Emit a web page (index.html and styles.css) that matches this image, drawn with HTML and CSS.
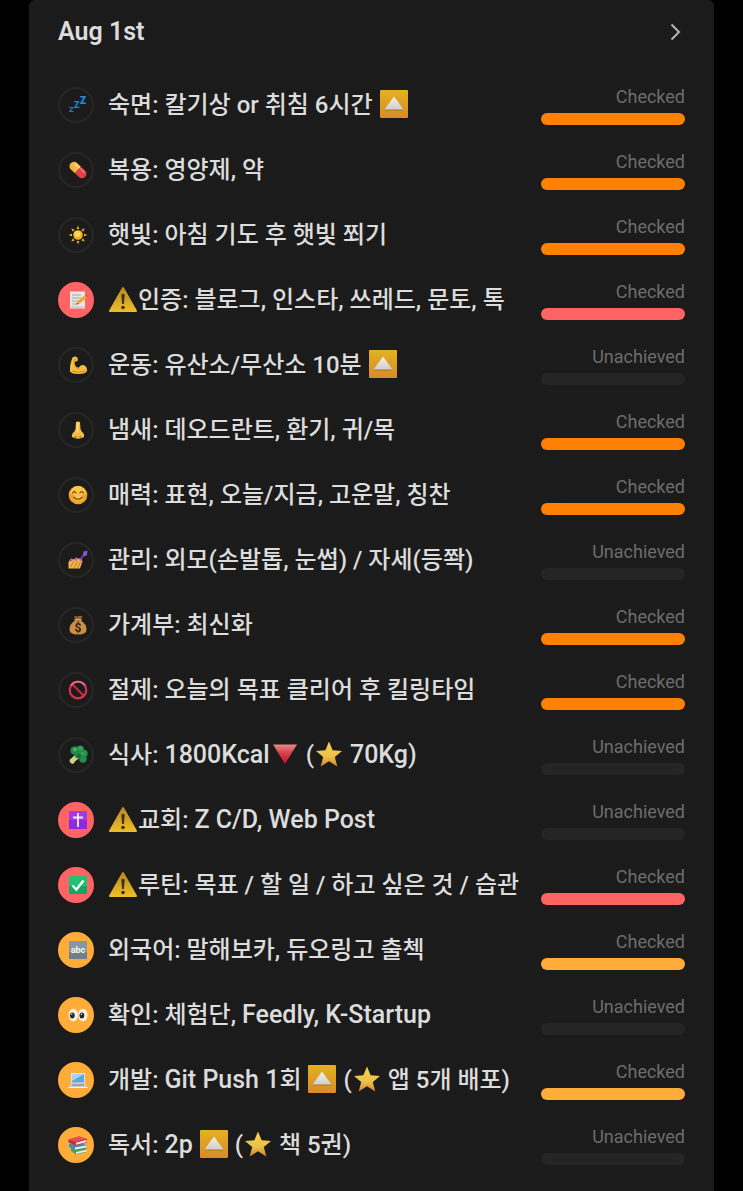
FILE: index.html
```html
<!DOCTYPE html>
<html lang="ko">
<head>
  <meta charset="UTF-8">
  <meta name="viewport" content="width=device-width, initial-scale=1.0">
  <title>Aug 1st</title>
  <link rel="stylesheet" href="styles.css">
</head>
<body>
  <!-- shared emoji -->
  <svg class="sprite" aria-hidden="true">
    <defs>
      <linearGradient id="gold" x1="0" y1="0" x2="0" y2="1">
        <stop offset="0" stop-color="#e2b21f"/>
        <stop offset="1" stop-color="#d98a2b"/>
      </linearGradient>
      <linearGradient id="white" x1="0" y1="0" x2="0" y2="1">
        <stop offset="0" stop-color="#f4f0e6"/>
        <stop offset="1" stop-color="#cfcfcf"/>
      </linearGradient>
      <linearGradient id="warn" x1="0" y1="0" x2="0" y2="1">
        <stop offset="0" stop-color="#b98a1c"/>
        <stop offset="1" stop-color="#ecbc2c"/>
      </linearGradient>
      <linearGradient id="star-fill" x1="0" y1="0" x2="0" y2="1">
        <stop offset="0" stop-color="#f3d548"/>
        <stop offset="0.6" stop-color="#ecc04a"/>
        <stop offset="1" stop-color="#d8832a"/>
      </linearGradient>
      <linearGradient id="red" x1="0" y1="0" x2="0" y2="1">
        <stop offset="0" stop-color="#e58a8c"/>
        <stop offset="0.4" stop-color="#d8474f"/>
        <stop offset="1" stop-color="#c00f22"/>
      </linearGradient>
    </defs>
    <symbol id="up" viewBox="0 0 28 28">
      <rect width="28" height="28" rx="1" fill="url(#gold)"/>
      <path d="M4.500 20.500 L14 7.500 L23.500 20.500z" fill="#a87616"/>
      <path d="M4.500 19.500 L14 6.500 L23.500 19.500z" fill="url(#white)"/>
    </symbol>
    <symbol id="warning" viewBox="0 0 28 28">
      <path d="M14 3 L27 26 H1z" fill="url(#warn)" stroke="url(#warn)" stroke-width="2" stroke-linejoin="round"/>
      <path d="M12.300 9.500 q1.700-1.500 3.400 0 l-.8 9.500 h-1.800z" fill="#3d3017"/>
      <circle cx="14" cy="22.500" r="1.800" fill="#3d3017"/>
    </symbol>
    <symbol id="star" viewBox="0 0 28 28">
      <path d="M14 1.500 L17.600 10.300 L27 11 L19.800 17 L22.300 26.500 L14 21.300 L5.700 26.500 L8.200 17 L1 11 L10.400 10.300z" fill="url(#star-fill)"/>
    </symbol>
    <symbol id="down" viewBox="0 0 28 28">
      <path d="M2 4.500 H26 L14 24z" fill="url(#red)"/>
    </symbol>
  </svg>

  <main class="card">
    <header class="header">
      <h1>Aug 1st</h1>
      <button class="next" type="button" aria-label="Next">
        <svg viewBox="0 0 20 20"><path d="M6.500 2.500 L14 10 L6.500 17.500"/></svg>
      </button>
    </header>

    <ul class="list">
      <li class="row">
        <span class="icon">
          <svg viewBox="0 0 20 20" class="zzz">
            <text x="1" y="17" font-size="8" fill="#1873cf">Z</text>
            <text x="6" y="13" font-size="9" fill="#1b84dc">Z</text>
            <text x="12" y="9" font-size="10" fill="#1d8fe6">Z</text>
          </svg>
        </span>
        <h2 class="title">숙면: 칼기상 or 취침 6시간 <svg class="emoji"><use href="#up"/></svg></h2>
        <div class="status"><span>Checked</span><div class="bar orange"></div></div>
      </li>
      <li class="row">
        <span class="icon">
          <svg viewBox="0 0 20 20">
            <g transform="rotate(43 10 10)">
              <path d="M10 5.500 H4.500 a4.500 4.500 0 0 0 0 9 H10z" fill="#f5b544"/>
              <path d="M10 5.500 H15.500 a4.500 4.500 0 0 1 0 9 H10z" fill="#e2404a"/>
              <path d="M4 7.500 H9" stroke="#ffdf94" stroke-width="1.500" stroke-linecap="round"/>
              <path d="M11 7.500 H16" stroke="#f58086" stroke-width="1.200" stroke-linecap="round"/>
            </g>
          </svg>
        </span>
        <h2 class="title">복용: 영양제, 약</h2>
        <div class="status"><span>Checked</span><div class="bar orange"></div></div>
      </li>
      <li class="row">
        <span class="icon">
          <svg viewBox="0 0 20 20">
            <g fill="#f2b01e">
              <path id="ray" d="M8.700 4 L10 .5 L11.300 4z"/>
              <use href="#ray" transform="rotate(45 10 10)"/>
              <use href="#ray" transform="rotate(90 10 10)"/>
              <use href="#ray" transform="rotate(135 10 10)"/>
              <use href="#ray" transform="rotate(180 10 10)"/>
              <use href="#ray" transform="rotate(225 10 10)"/>
              <use href="#ray" transform="rotate(270 10 10)"/>
              <use href="#ray" transform="rotate(315 10 10)"/>
              <circle cx="10" cy="10" r="4.800"/>
            </g>
            <circle cx="9.500" cy="9" r="3" fill="#ffd75c"/>
          </svg>
        </span>
        <h2 class="title">햇빛: 아침 기도 후 햇빛 쬐기</h2>
        <div class="status"><span>Checked</span><div class="bar orange"></div></div>
      </li>
      <li class="row">
        <span class="icon red">
          <svg viewBox="0 0 20 20">
            <path d="M2 1.500 H17 V18.500 H2z" fill="#e9e7e4"/>
            <path d="M4 5 H13 M4 8 H14 M4 11 H11 M4 14 H9" stroke="#a3a7ab"/>
            <path d="M3 17 H16.500" stroke="#bdb9b4"/>
            <path d="M8.500 14.500 L9.500 11.500 L17 5 L19 7.500 L11.500 13.800z" fill="#f0a32b"/>
            <path d="M17 5 l1-.9 2 2.400 -1 1z" fill="#d0526a"/>
            <path d="M8.500 14.500 l.5-1.500 1.200 1.100z" fill="#3a3330"/>
          </svg>
        </span>
        <h2 class="title"><svg class="emoji"><use href="#warning"/></svg>인증: 블로그, 인스타, 쓰레드, 문토, 톡</h2>
        <div class="status"><span>Checked</span><div class="bar red"></div></div>
      </li>
      <li class="row">
        <span class="icon">
          <svg viewBox="0 0 20 20">
            <path d="M4.500 2.500 Q7.500 .5 9.500 3 Q10.500 5.500 8.500 6.500 L6.800 6.200 Q6 8.500 7.500 11 Q9.500 13 11 12.500 Q12 9.500 15.500 10 Q19.500 11.500 19 16 Q18 19 10 19 Q4 19 2 16.500 Q1.500 10 4.500 2.500z" fill="#f6bd3b"/>
            <path d="M4 16 Q10 18.500 17.500 16 M7.500 11.500 Q8.500 13.500 11 13.800 M5.500 5.500 L8 4" stroke="#cf8626" fill="none"/>
          </svg>
        </span>
        <h2 class="title">운동: 유산소/무산소 10분 <svg class="emoji"><use href="#up"/></svg></h2>
        <div class="status"><span>Unachieved</span><div class="bar"></div></div>
      </li>
      <li class="row">
        <span class="icon">
          <svg viewBox="0 0 20 20">
            <path d="M8 2 Q10 .8 12 2 L12.500 9 Q13 11.500 15.500 13.500 Q17.500 17.500 13.500 18 Q10 19.500 6.500 18 Q2.500 17.500 4.500 13.500 Q7 11.500 7.500 9z" fill="#f5bd45"/>
            <path d="M9.500 3 V12" stroke="#ffdf88" stroke-width="1.500" stroke-linecap="round"/>
            <ellipse cx="7.500" cy="17" rx="1.300" ry=".8" fill="#a86420"/>
            <ellipse cx="12.500" cy="17" rx="1.300" ry=".8" fill="#a86420"/>
          </svg>
        </span>
        <h2 class="title">냄새: 데오드란트, 환기, 귀/목</h2>
        <div class="status"><span>Checked</span><div class="bar orange"></div></div>
      </li>
      <li class="row">
        <span class="icon">
          <svg viewBox="0 0 20 20">
            <circle cx="10" cy="10" r="9.300" fill="#f2a32c"/>
            <circle cx="10" cy="8.500" r="7.500" fill="#fbc646"/>
            <circle cx="4.500" cy="11.500" r="2.200" fill="#f0983a"/>
            <circle cx="15.500" cy="11.500" r="2.200" fill="#f0983a"/>
            <path d="M4.500 8 q1.800-2.700 3.600 0 M11.900 8 q1.800-2.700 3.600 0 M6 12.500 q4 3.500 8 0" stroke="#69421c" stroke-width="1.200" stroke-linecap="round" fill="none"/>
          </svg>
        </span>
        <h2 class="title">매력: 표현, 오늘/지금, 고운말, 칭찬</h2>
        <div class="status"><span>Checked</span><div class="bar orange"></div></div>
      </li>
      <li class="row">
        <span class="icon">
          <svg viewBox="0 0 20 20">
            <path d="M.5 18.500 V12 L3 8.500 L6 9.500 L8 7.500 L10.500 8.800 L13 8 L14.500 11 L12 18.500z" fill="#f2b64b"/>
            <path d="M2.500 17 L6 11 M6 18 L9.500 11.500 M9.500 18 L12.500 12" stroke="#b9782d"/>
            <path d="M1.500 11 L3.300 8.500 5 9.500 3.500 11.800z M6.500 10 L8.200 7.500 10 8.800 8.500 11z M11 10 L13 7.800 14.500 10 13 11.500z" fill="#b45ac6"/>
            <path d="M12 9.500 L16 5" stroke="#7c4bb8" stroke-width="1.500"/>
            <path d="M15.500 1.500 L19.500 .5 L19 5 L16.500 6.500 L14.800 4.800z" fill="#8a55c8"/>
          </svg>
        </span>
        <h2 class="title">관리: 외모(손발톱, 눈썹) / 자세(등쫙)</h2>
        <div class="status"><span>Unachieved</span><div class="bar"></div></div>
      </li>
      <li class="row">
        <span class="icon">
          <svg viewBox="0 0 20 20">
            <path d="M6 1.500 Q8 .5 9.500 1.800 Q12 0 14.500 1.500 L12.800 4.500 H7.500z" fill="#94652c"/>
            <path d="M7 5.500 H13 Q18.500 9 18.500 14.500 Q18.500 19.500 10 19.500 Q1.500 19.500 1.500 14.500 Q1.500 9 7 5.500z" fill="#ca8f45"/>
            <path d="M6.500 4.800 H13.500" stroke="#e3b254" stroke-width="1.500"/>
            <text x="10" y="17" font-size="12" font-weight="700" text-anchor="middle" fill="#33220f">$</text>
          </svg>
        </span>
        <h2 class="title">가계부: 최신화</h2>
        <div class="status"><span>Checked</span><div class="bar orange"></div></div>
      </li>
      <li class="row">
        <span class="icon">
          <svg viewBox="0 0 20 20">
            <path d="M4 4 L16 16" stroke="#c82645" stroke-width="2.200"/>
            <circle cx="10" cy="10" r="8.300" fill="none" stroke="#d5304e" stroke-width="2.200"/>
            <path d="M3 5.500 A8.300 8.300 0 0 1 17 5.500" fill="none" stroke="#e2798a" stroke-width="1.500"/>
          </svg>
        </span>
        <h2 class="title">절제: 오늘의 목표 클리어 후 킬링타임</h2>
        <div class="status"><span>Checked</span><div class="bar orange"></div></div>
      </li>
      <li class="row">
        <span class="icon">
          <svg viewBox="0 0 20 20">
            <path d="M1.500 15 L8 9 L13 12 L8 15.500 L5 19 Q1.500 18.500 1.500 15z" fill="#d3d08a"/>
            <g fill="#238a49">
              <circle cx="6.500" cy="5.500" r="4"/>
              <circle cx="12" cy="4.500" r="4"/>
              <circle cx="16" cy="8.500" r="3.800"/>
              <circle cx="15" cy="14" r="3.800"/>
              <circle cx="10.500" cy="9.500" r="4"/>
            </g>
            <circle cx="7" cy="4.500" r="2" fill="#46b25f"/>
            <circle cx="12.500" cy="3.500" r="2" fill="#3aa557"/>
            <circle cx="15" cy="8.500" r="2" fill="#36a055"/>
            <circle cx="11" cy="11" r="2" fill="#176b39"/>
          </svg>
        </span>
        <h2 class="title">식사: <span class="en">1800Kcal</span><svg class="emoji"><use href="#down"/></svg> (<svg class="emoji"><use href="#star"/></svg> <span class="en">70Kg)</span></h2>
        <div class="status"><span>Unachieved</span><div class="bar"></div></div>
      </li>
      <li class="row">
        <span class="icon red">
          <svg viewBox="0 0 20 20">
            <rect x="1" y="1" width="18" height="18" fill="#a43be0"/>
            <rect x="1" y="10" width="18" height="9" fill="#8a2be2"/>
            <path d="M10 3 V17 M5 7.500 H15" stroke="#f3eaf8" stroke-width="1.800"/>
          </svg>
        </span>
        <h2 class="title"><svg class="emoji"><use href="#warning"/></svg>교회: <span class="en">Z C/D, Web Post</span></h2>
        <div class="status"><span>Unachieved</span><div class="bar"></div></div>
      </li>
      <li class="row">
        <span class="icon red">
          <svg viewBox="0 0 20 20">
            <rect x="1" y="1" width="18" height="18" fill="#21c275"/>
            <rect x="1" y="11" width="18" height="8" fill="#12a860"/>
            <path d="M4.500 10.500 L8.300 14.500 L15.500 5.500" stroke="#f1fff6" stroke-width="2.500" fill="none"/>
          </svg>
        </span>
        <h2 class="title"><svg class="emoji"><use href="#warning"/></svg>루틴: 목표 / 할 일 / 하고 싶은 것 / 습관</h2>
        <div class="status"><span>Checked</span><div class="bar red"></div></div>
      </li>
      <li class="row">
        <span class="icon amber">
          <svg viewBox="0 0 20 20">
            <rect x="1" y="1" width="18" height="18" fill="#8597a4"/>
            <rect x="1" y="12" width="18" height="7" fill="#6f7f8c"/>
            <text x="10" y="13" font-size="9" font-weight="700" text-anchor="middle" fill="#f2f2f2">abc</text>
          </svg>
        </span>
        <h2 class="title">외국어: 말해보카, 듀오링고 출첵</h2>
        <div class="status"><span>Checked</span><div class="bar amber"></div></div>
      </li>
      <li class="row">
        <span class="icon amber">
          <svg viewBox="0 0 20 20">
            <ellipse cx="5.300" cy="10" rx="4.600" ry="6.300" fill="#f7f4ee"/>
            <ellipse cx="14.900" cy="10" rx="4.600" ry="6.300" fill="#f7f4ee"/>
            <ellipse cx="4.300" cy="10.500" rx="2.400" ry="3" fill="#2c2521"/>
            <ellipse cx="13.900" cy="10.500" rx="2.400" ry="3" fill="#2c2521"/>
            <circle cx="3.800" cy="9.300" r=".7" fill="#fff"/>
            <circle cx="13.400" cy="9.300" r=".7" fill="#fff"/>
          </svg>
        </span>
        <h2 class="title">확인: 체험단, <span class="en">Feedly, K-Startup</span></h2>
        <div class="status"><span>Unachieved</span><div class="bar"></div></div>
      </li>
      <li class="row">
        <span class="icon amber">
          <svg viewBox="0 0 20 20">
            <path d="M3 3 H17 V13.500 H3z" fill="#dfe4e8"/>
            <path d="M4 4 H16 V12.500 H4z" fill="#5ba7e4"/>
            <path d="M4 4 H16 L4 11z" fill="#a9d5f5"/>
            <path d="M3 13.500 H17 L19.500 17 H.5z" fill="#c5cacd"/>
            <path d="M4 15 H16" stroke="#7b8388"/>
            <path d="M.5 17 H19.500 V18 H.5z" fill="#eff1f2"/>
          </svg>
        </span>
        <h2 class="title">개발: <span class="en">Git Push 1</span>회 <svg class="emoji"><use href="#up"/></svg> (<svg class="emoji"><use href="#star"/></svg> 앱 5개 배포)</h2>
        <div class="status"><span>Checked</span><div class="bar amber"></div></div>
      </li>
      <li class="row">
        <span class="icon amber">
          <svg viewBox="0 0 20 20">
            <path d="M3 13 L13 11 L19 14 V17 L8 19.500 L3 16z" fill="#4f9c57"/>
            <path d="M8 17 L19 14.500 V16.500 L8 19z" fill="#e9ebe0"/>
            <path d="M1 9 L11 7.500 L18 10 V12.500 L7 15 L1 12z" fill="#4c88b5"/>
            <path d="M7 12.500 L18 10.500 V12.500 L7 14.500z" fill="#f1efe9"/>
            <path d="M.5 4.500 L11 1.500 L19 4 V7.500 L8 10.500 L.5 7.500z" fill="#c9303c"/>
            <path d="M.5 4.500 L11 1.500 L19 4 L8 6.800z" fill="#e4505a"/>
            <path d="M8 7.800 L18.500 5 V7 L8 9.700z" fill="#f3ece7"/>
          </svg>
        </span>
        <h2 class="title">독서: <span class="en">2p</span> <svg class="emoji"><use href="#up"/></svg> (<svg class="emoji"><use href="#star"/></svg> 책 5권)</h2>
        <div class="status"><span>Unachieved</span><div class="bar"></div></div>
      </li>
    </ul>
  </main>
</body>
</html>
```
FILE: styles.css
```css
:root {
  --bg: #000;
  --card: #1b1b1b;
  --text: #dcdcdc;
  --muted: #6c6c6c;
  --track: #252525;
  --orange: #ff8103;
  --red: #ff6464;
  --amber: #ffac38;
}

* {
  margin: 0;
  padding: 0;
  box-sizing: border-box;
}

body {
  background: var(--bg);
  color: var(--text);
  font-family: Roboto, "Noto Sans CJK KR", sans-serif;
}

.sprite {
  position: absolute;
  width: 0;
  height: 0;
}

.card {
  min-height: 100vh;
  margin: 0 29px;
  padding: 0 29px 14px;
  background: var(--card);
  border-radius: 6px 6px 0 0;
}

.header {
  display: flex;
  align-items: center;
  justify-content: space-between;
  height: 64px;
  margin-bottom: 8px;
}

h1,
.title {
  font-size: 24px;
  font-weight: 500;
  line-height: 32px;
}

h1 {
  font-size: 25px;
  font-weight: 600;
}

/* latin runs sit a little larger next to hangul */
.en {
  font-size: 25px;
}

.next {
  width: 20px;
  height: 20px;
  background: none;
  border: none;
  cursor: pointer;
}

.next svg {
  display: block;
  fill: none;
  stroke: #b4b4b4;
  stroke-width: 2;
}

.list {
  list-style: none;
}

.row {
  display: flex;
  align-items: center;
  height: 65px;
}

.icon {
  display: flex;
  align-items: center;
  justify-content: center;
  flex: none;
  width: 36px;
  height: 36px;
  margin-right: 14px;
  padding-left: 4px;
  border: 2px solid #272727;
  border-radius: 50%;
}

.icon svg {
  width: 20px;
  height: 20px;
}

.icon text {
  font-family: Roboto, sans-serif;
}

.zzz text {
  font-weight: 900;
}

.icon.red {
  background: var(--red);
  border-color: var(--red);
}

.icon.amber {
  background: var(--amber);
  border-color: var(--amber);
}

.title {
  flex: 1;
  white-space: nowrap;
}

.emoji {
  width: 28px;
  height: 28px;
  margin: 0 1px;
  vertical-align: -5px;
}

.status {
  display: flex;
  flex-direction: column;
  flex: none;
  gap: 3px;
  width: 144px;
  color: var(--muted);
  font-size: 18px;
  line-height: 26px;
  text-align: right;
}

.bar {
  height: 12px;
  background: var(--track);
  border-radius: 6px;
}

.bar.orange {
  background: var(--orange);
}

.bar.red {
  background: var(--red);
}

.bar.amber {
  background: var(--amber);
}
```
